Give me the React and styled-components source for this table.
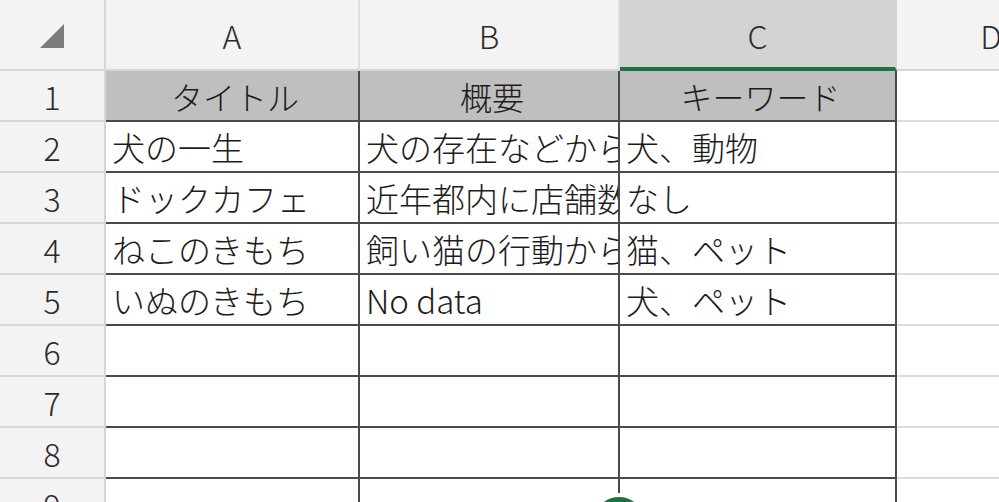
import styled, { createGlobalStyle } from "styled-components";

const GlobalStyle = createGlobalStyle`
  html, body {
    margin: 0;
    padding: 0;
    background: #ffffff;
    overflow: hidden;
  }
  body {
    font-family: "Noto Sans CJK JP", "Noto Sans", sans-serif;
    color: #1c1c1c;
  }
`;

const Sheet = styled.div`
  position: relative;
  width: 999px;
  height: 502px;
  overflow: hidden;
`;

const Grid = styled.div`
  display: grid;
  grid-template-columns: 106px 254px 260px 277px 190px;
  grid-template-rows: 71px repeat(9, 51px);
`;

const Corner = styled.div`
  background: #f3f3f3;
  border-right: 2px solid #d6d6d6;
  border-bottom: 2px solid #d6d6d6;
  box-sizing: border-box;
  display: flex;
  align-items: flex-end;
  justify-content: flex-end;
  padding: 0 40px 21px 0;
`;

const ColHead = styled.div`
  background: ${(p) => (p.$selected ? "#d3d3d3" : "#f3f3f3")};
  border-right: 2px solid ${(p) => (p.$selected ? "#d3d3d3" : "#dedede")};
  border-bottom: ${(p) =>
    p.$selected ? "4px solid #1e7145" : "2px solid #d6d6d6"};
  box-sizing: border-box;
  display: flex;
  align-items: center;
  justify-content: center;
  font-size: 32px;
  font-weight: 300;
  color: #2a2a2a;
  padding-top: ${(p) => (p.$selected ? "2px" : "0")};
`;

const RowHead = styled.div`
  background: #f3f3f3;
  border-right: 2px solid #d6d6d6;
  border-bottom: 2px solid #d6d6d6;
  box-sizing: border-box;
  display: flex;
  align-items: center;
  justify-content: center;
  font-size: 32px;
  font-weight: 300;
  color: #2a2a2a;
`;

const Cell = styled.div`
  background: ${(p) => (p.$head ? "#bfbfbf" : "#ffffff")};
  border-right: 2px solid ${(p) => (p.$outside ? "#dcdcdc" : "#4a4a4a")};
  border-bottom: 2px solid ${(p) => (p.$outside ? "#dcdcdc" : "#4a4a4a")};
  box-sizing: border-box;
  display: flex;
  align-items: center;
  justify-content: ${(p) => (p.$head ? "center" : "flex-start")};
  padding: 0 0 0 6px;
  overflow: hidden;
  white-space: nowrap;
  font-size: ${(p) => (p.$head ? "32px" : "33px")};
  font-weight: 300;
  color: #1c1c1c;
`;

const Handle = styled.div`
  position: absolute;
  left: 590px;
  top: 493px;
  width: 50px;
  height: 50px;
  border-radius: 50%;
  background: #1e7145;
  border: 4px solid #ffffff;
`;

const columns = [
  { key: "A", selected: false },
  { key: "B", selected: false },
  { key: "C", selected: true },
  { key: "D", selected: false },
];

const rows = [
  ["タイトル", "概要", "キーワード"],
  ["犬の一生", "犬の存在などから人との関係を見る", "犬、動物"],
  ["ドックカフェ", "近年都内に店舗数が増加", "なし"],
  ["ねこのきもち", "飼い猫の行動から気持ちを読む", "猫、ペット"],
  ["いぬのきもち", "No data", "犬、ペット"],
  ["", "", ""],
  ["", "", ""],
  ["", "", ""],
  ["", "", ""],
];

const SelectAll = () => (
  <svg width="24" height="24" viewBox="0 0 24 24">
    <polygon points="24,0 24,24 0,24" fill="#7b7b7b" />
  </svg>
);

const App = () => {
  return (
    <Sheet>
      <GlobalStyle />
      <Grid>
        <Corner>
          <SelectAll />
        </Corner>
        {columns.map((c) => (
          <ColHead key={c.key} $selected={c.selected}>
            {c.key}
          </ColHead>
        ))}
        {rows.map((row, i) => (
          <Row key={i} index={i + 1} cells={row} />
        ))}
      </Grid>
      <Handle />
    </Sheet>
  );
};

const Row = ({ index, cells }) => (
  <>
    <RowHead>{index}</RowHead>
    {cells.map((text, j) => (
      <Cell key={j} $head={index === 1}>
        {text}
      </Cell>
    ))}
    <Cell $outside />
  </>
);

export default App;
